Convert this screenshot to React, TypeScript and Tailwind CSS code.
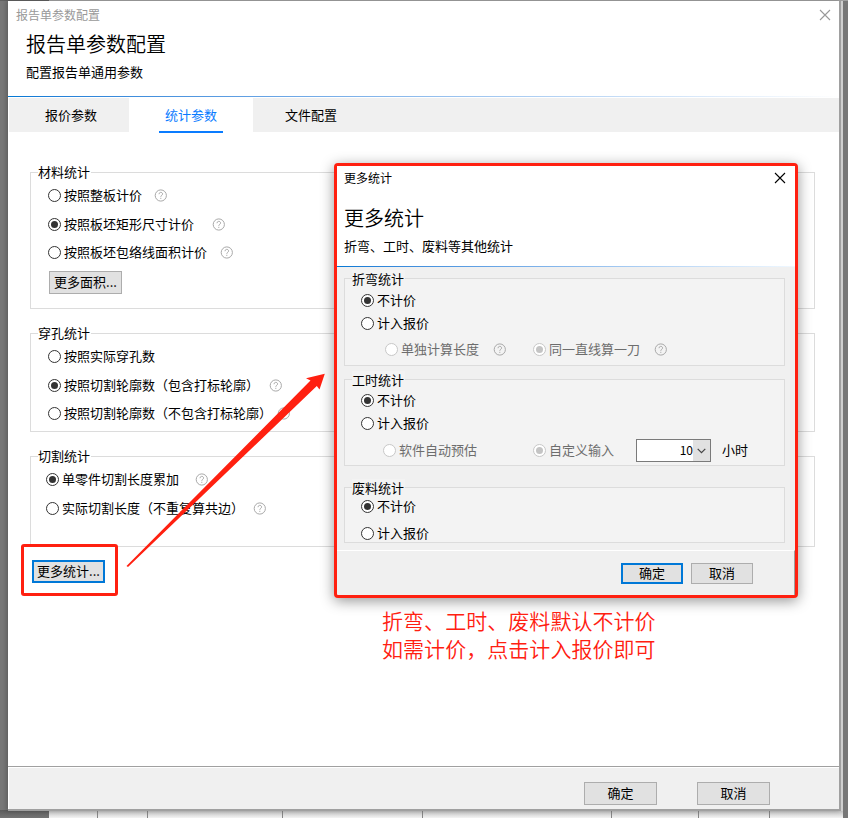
import React from "react";
import type { ReactNode } from "react";
import { clsx } from "clsx";

interface RadioProps {
  label: string;
  checked?: boolean;
  disabled?: boolean;
  className?: string;
}

function Radio({ label, checked = false, disabled = false, className }: RadioProps) {
  return (
    <label className={clsx("flex h-5 shrink-0 items-center gap-[3px]", className)}>
      <span
        className={clsx(
          "flex h-[13px] w-[13px] shrink-0 items-center justify-center rounded-full border bg-white",
          disabled ? "border-[#c8c8c8]" : "border-[#333333]"
        )}
      >
        {checked && (
          <span
            className={clsx(
              "h-[7px] w-[7px] rounded-full",
              disabled ? "bg-[#c4c4c4]" : "bg-[#333333]"
            )}
          />
        )}
      </span>
      <span className={clsx("pb-px leading-[18px]", disabled ? "text-[#6d6d6d]" : "text-black")}>
        {label}
      </span>
    </label>
  );
}

function HelpIcon({ className }: { className?: string }) {
  return (
    <svg
      width="13"
      height="13"
      viewBox="0 0 13 13"
      fill="none"
      stroke="#a8a8a8"
      className={clsx("shrink-0", className)}
    >
      <circle cx="6.8" cy="6.5" r="5.6" />
      <path d="M5 5.2C5 2.8 8.6 2.8 8.6 5C8.6 6.2 6.8 6.4 6.8 7.8" />
      <path d="M6.8 8.8V9.9" />
    </svg>
  );
}

function CloseIcon({ className }: { className?: string }) {
  return (
    <svg width="12" height="12" viewBox="0 0 12 12" fill="none" className={className}>
      <path d="M1 1L11 11M11 1L1 11" stroke="currentColor" strokeWidth="1.1" />
    </svg>
  );
}

interface ButtonProps {
  children: ReactNode;
  primary?: boolean;
  className?: string;
}

function Button({ children, primary = false, className }: ButtonProps) {
  return (
    <button
      type="button"
      className={clsx(
        "flex shrink-0 items-center justify-center bg-[#e1e1e1] pb-[2px] leading-4 text-black",
        primary ? "border-2 border-[#0078d7]" : "border border-[#adadad]",
        className
      )}
    >
      {children}
    </button>
  );
}

interface GroupProps {
  title: string;
  children: ReactNode;
  className?: string;
  legendClassName?: string;
}

function Group({ title, children, className, legendClassName }: GroupProps) {
  return (
    <section className={clsx("shrink-0 border border-[#dcdcdc]", className)}>
      <h3 className={clsx("-mt-[9px] ml-[7px] h-4 w-[53px]", legendClassName)}>{title}</h3>
      {children}
    </section>
  );
}

function MoreStatsDialog() {
  return (
    <div className="absolute left-[334px] top-[163px] flex h-[435px] w-[464px] flex-col rounded-[4px] border-[3px] border-[#ff2010] bg-[#f0f0f0] shadow-[0_3px_14px_rgba(0,0,0,0.42)]">
      <header className="h-[100px] shrink-0 bg-white pl-[7px]">
        <div className="flex h-[25px] items-center justify-between pr-[9px] text-[12px]">
          <span className="pb-[2px]">更多统计</span>
          <CloseIcon className="mb-px text-black" />
        </div>
        <h2 className="mt-[15px] h-6 text-[20px] font-[350] leading-6">更多统计</h2>
        <p className="mt-[8px] h-4 leading-[15px]">折弯、工时、废料等其他统计</p>
      </header>
      <div className="h-px shrink-0 bg-gradient-to-r from-[#0078d4] to-[#f0f8ff]" />

      <div className="flex h-[283px] shrink-0 flex-col px-[7px] pt-[11px]">
        <Group
          title="折弯统计"
          className="h-[88px] w-[441px] bg-[#f3f3f3]"
          legendClassName="bg-[#f3f3f3] leading-[17px]"
        >
          <div className="pl-4">
            <Radio label="不计价" checked className="mt-[4px]" />
            <Radio label="计入报价" className="mt-[3px]" />
            <div className="mt-[6px] flex items-center pl-6">
              <Radio label="单独计算长度" disabled className="w-[108px]" />
              <HelpIcon />
              <Radio label="同一直线算一刀" checked disabled className="ml-[27px] w-[121px]" />
              <HelpIcon />
            </div>
          </div>
        </Group>

        <Group
          title="工时统计"
          className="mt-[13px] h-[87px] w-[441px] bg-[#f3f3f3]"
          legendClassName="bg-[#f3f3f3] leading-[17px]"
        >
          <div className="pl-4">
            <Radio label="不计价" checked className="mt-[3px]" />
            <Radio label="计入报价" className="mt-[3px]" />
            <div className="mt-[6px] flex h-[23px] items-center pl-[22px]">
              <Radio label="软件自动预估" disabled className="w-[150px]" />
              <Radio label="自定义输入" checked disabled className="w-[103px]" />
              <div className="flex h-[23px] w-[75px] border border-[#7a7a7a] bg-white">
                <span className="flex-1 text-right text-[12px] leading-[19px]">10</span>
                <span className="flex w-[17px] items-center justify-center bg-[#e1e1e1]">
                  <svg width="9" height="6" viewBox="0 0 9 6" fill="none" stroke="#444444">
                    <path d="M0.7 0.8L4.5 4.6L8.3 0.8" strokeWidth="1.2" />
                  </svg>
                </span>
              </div>
              <span className="ml-[11px] pb-[2px] leading-5">小时</span>
            </div>
          </div>
        </Group>

        <Group
          title="废料统计"
          className="mt-[21px] h-[56px] w-[441px] bg-[#f3f3f3]"
          legendClassName="bg-[#f3f3f3] leading-[17px]"
        >
          <div className="pl-4">
            <Radio label="不计价" checked className="mt-[1px]" />
            <Radio label="计入报价" className="mt-[7px]" />
          </div>
        </Group>
      </div>

      <footer className="flex flex-1 gap-2 border-r border-t border-r-[#a0a0a0] border-t-white pl-[284px] pt-[12px]">
        <Button primary className="h-[21px] w-[62px]">确定</Button>
        <Button className="h-[21px] w-[62px]">取消</Button>
      </footer>
    </div>
  );
}

// Window edges that stay visible behind the main dialog
function Backdrop() {
  return (
    <div className="absolute inset-0 flex flex-col bg-[#777777]">
      <div className="flex h-px">
        <div className="w-[49px] bg-[#606060]" />
        <div className="flex-1 bg-[#a0a0a0]" />
      </div>
      <div className="flex-1" />
      <div className="flex h-2 bg-gradient-to-b from-[#b8b8b8] to-[#f4f4f4]">
        <div className="w-[49px] bg-gradient-to-b from-[#5c5c5c] to-[#747474]" />
        <div className="w-[49px] border-r border-[#858585]" />
        <div className="w-[50px] border-r border-[#858585]" />
        <div className="w-[135px] border-r border-[#858585]" />
        <div className="w-[140px] border-r border-[#858585]" />
        <div className="w-[189px] border-r border-[#858585]" />
        <div className="w-[87px] border-r border-[#858585]" />
        <div className="w-[71px] border-r border-[#858585]" />
        <div className="flex-1" />
        <div className="w-[5px] bg-[#777777]" />
      </div>
    </div>
  );
}

export default function App() {
  return (
    <div className="relative h-[818px] w-[848px] overflow-hidden font-['Noto_Sans_CJK_SC',sans-serif] text-[13px] font-normal text-black">
      <Backdrop />
      <div className="relative flex h-full w-[843px] flex-col pl-2 pr-[2px] pt-px">
        <div className="flex h-[810px] w-[833px] flex-col border-b-2 border-r-2 border-[#a0a0a0] bg-white shadow-[2px_0_0_#cfcfcf,-2px_0_4px_rgba(0,0,0,0.2)]">
          <header className="h-[95px] shrink-0">
            <div className="flex h-[28px] items-center justify-between pl-2 pr-[8px] text-[12px] text-[#999999]">
              <span>报告单参数配置</span>
              <CloseIcon />
            </div>
            <h1 className="ml-[18px] mt-[3px] h-6 text-[20px] font-[350] leading-6">报告单参数配置</h1>
            <p className="ml-[18px] mt-[8px] h-4 leading-[15px]">配置报告单通用参数</p>
          </header>
          <div className="h-px shrink-0 bg-gradient-to-r from-[#0078d4] to-white" />

          <nav className="mt-px flex h-[35px] shrink-0 pl-px">
            <div className="flex h-[34px] w-[120px] items-center bg-[#f0f0f0] pb-px pl-9">报价参数</div>
            <div className="flex w-[124px] justify-center">
              <div className="flex h-[35px] w-16 items-center justify-center border-b-2 border-[#0a7cff] text-[#0a7cff]">
                统计参数
              </div>
            </div>
            <div className="flex h-[34px] flex-1 items-center bg-[#f0f0f0] pb-px pl-8">文件配置</div>
          </nav>

          <main className="flex flex-1 flex-col pl-[22px] pt-[39px]">
            <Group
              title="材料统计"
              className="h-[137px] w-[785px]"
              legendClassName="bg-white leading-[15px]"
            >
              <div className="pl-[17px]">
                <div className="mt-[5px] flex items-center">
                  <Radio label="按照整板计价" />
                  <HelpIcon className="ml-[12px]" />
                </div>
                <div className="mt-[9px] flex items-center">
                  <Radio label="按照板坯矩形尺寸计价" checked />
                  <HelpIcon className="ml-[18px]" />
                </div>
                <div className="mt-[8px] flex items-center">
                  <Radio label="按照板坯包络线面积计价" />
                  <HelpIcon className="ml-[13px]" />
                </div>
                <Button className="ml-px mt-[9px] h-[23px] w-[73px]">更多面积...</Button>
              </div>
            </Group>

            <Group
              title="穿孔统计"
              className="mt-[24px] h-[99px] w-[785px]"
              legendClassName="bg-white leading-[15px]"
            >
              <div className="pl-[17px]">
                <Radio label="按照实际穿孔数" className="mt-[5px]" />
                <div className="mt-[9px] flex items-center">
                  <Radio label="按照切割轮廓数（包含打标轮廓）" checked />
                  <HelpIcon className="ml-[10px]" />
                </div>
                <div className="mt-[8px] flex items-center">
                  <Radio label="按照切割轮廓数（不包含打标轮廓）" />
                  <HelpIcon className="ml-[5px]" />
                </div>
              </div>
            </Group>

            <Group
              title="切割统计"
              className="mt-[24px] h-[91px] w-[785px]"
              legendClassName="bg-white leading-[15px]"
            >
              <div className="pl-[15px]">
                <div className="mt-[5px] flex items-center">
                  <Radio label="单零件切割长度累加" checked />
                  <HelpIcon className="ml-[16px]" />
                </div>
                <div className="mt-[9px] flex items-center">
                  <Radio label="实际切割长度（不重复算共边）" />
                  <HelpIcon className="ml-[9px]" />
                </div>
              </div>
            </Group>

            <Button primary className="ml-[2px] mt-[13px] h-[23px] w-[73px]">更多统计...</Button>
          </main>

          <footer className="flex h-[43px] shrink-0 border-t border-[#a0a0a0] pl-px pt-px">
            <div className="flex flex-1 gap-10 bg-[#f0f0f0] pl-[575px] pt-[14px]">
              <Button className="h-[23px] w-[73px]">确定</Button>
              <Button className="h-[23px] w-[73px]">取消</Button>
            </div>
          </footer>
        </div>
      </div>

      <MoreStatsDialog />

      {/* Annotations */}
      <div className="absolute left-[21px] top-[544px] h-[52px] w-[97px] rounded-[3px] border-[3px] border-[#ff2010]" />
      <svg className="absolute left-[120px] top-[365px]" width="212" height="210" viewBox="120 365 212 210">
        <path
          d="M126.5 566L310.5 380.5L306 378.3L324.8 373.8L319.5 389.5L316.8 386L128 567Z"
          fill="#ff2010"
        />
      </svg>
      <p className="absolute left-[382px] top-[606px] whitespace-nowrap text-[21px] font-[350] leading-[28px] tracking-[0.05px] text-[#ff2010]">
        折弯、工时、废料默认不计价
        <br />
        如需计价，点击计入报价即可
      </p>
    </div>
  );
}
